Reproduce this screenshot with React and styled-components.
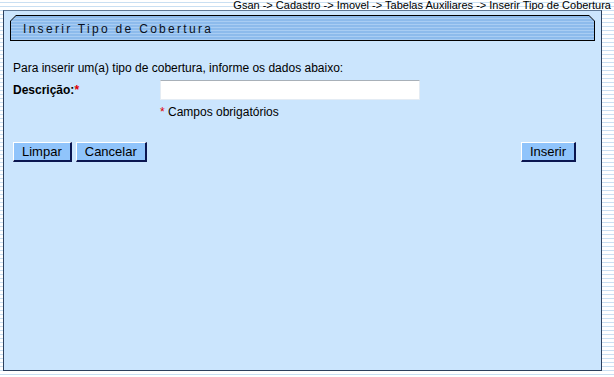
import React from 'react';
import styled, { createGlobalStyle } from 'styled-components';

const GlobalStyle = createGlobalStyle`
	html, body {
		margin: 0;
		padding: 0;
	}
	body {
		width: 614px;
		height: 377px;
		overflow: hidden;
		font-family: "Liberation Sans", Arial, sans-serif;
		background: repeating-linear-gradient(
			to bottom,
			#ffffff 0px,
			#ffffff 2px,
			#c9dff2 2px,
			#c9dff2 3px,
			#ffffff 3px,
			#ffffff 4px
		);
	}
`;

const Page = styled.div`
	display: flex;
	flex-direction: column;
`;

const Breadcrumb = styled.div`
	height: 10px;
	line-height: 10px;
	font-size: 11px;
	color: #000;
	text-align: right;
	padding-right: 3px;
	white-space: nowrap;
`;

const Panel = styled.div`
	margin: 0 12px 0 3px;
	height: 351px;
	border: 1px solid #2c3f5c;
	border-top-color: #5f7896;
	background: #cbe5fd;
	padding: 4px 6px;
	display: flex;
	flex-direction: column;
`;

const Header = styled.div`
	position: relative;
	height: 26px;
	background: #000;
	clip-path: polygon(6px 0, calc(100% - 6px) 0, 100% 6px, 100% 100%, 0 100%, 0 6px);
`;

const HeaderFill = styled.div`
	position: absolute;
	inset: 1px;
	clip-path: polygon(5px 0, calc(100% - 5px) 0, 100% 5px, 100% 100%, 0 100%, 0 5px);
	background: repeating-linear-gradient(
		to bottom,
		#8dbbec 0px,
		#8dbbec 2px,
		#a9cdf3 2px,
		#a9cdf3 3px
	);
	display: flex;
	align-items: center;
	padding-left: 12px;
	padding-top: 2px;
	font-size: 12px;
	letter-spacing: 2.3px;
	color: #0a1020;
`;

const Intro = styled.div`
	margin-top: 20px;
	padding-left: 3px;
	font-size: 12px;
	color: #000;
`;

const FormRow = styled.div`
	display: grid;
	grid-template-columns: 147px 260px;
	align-items: center;
	margin-top: 5px;
	padding-left: 3px;
`;

const Label = styled.label`
	font-size: 12px;
	font-weight: bold;
	color: #000;
`;

const Required = styled.span`
	color: #e00000;
`;

const Input = styled.input`
	height: 20px;
	box-sizing: border-box;
	border: 1px solid #e4ecf4;
	border-top-color: #a8b0b8;
	background: #fff;
	outline: none;
`;

const Note = styled.div`
	margin-top: 5px;
	padding-left: 150px;
	font-size: 12px;
	color: #000;
`;

const ButtonBar = styled.div`
	display: flex;
	align-items: center;
	gap: 4px;
	margin-top: 23px;
	padding-left: 3px;
	padding-right: 19px;
`;

const Spacer = styled.div`
	flex: 1;
`;

const Button = styled.button`
	height: 20px;
	padding: 0 ${({ pad }) => pad}px;
	font-family: "Liberation Sans", Arial, sans-serif;
	font-size: 13px;
	color: #000;
	background: #90c4fb;
	border-style: solid;
	border-color: #ffffff #0b1650 #0b1650 #ffffff;
	border-width: 1px 2px 2px 1px;
	cursor: pointer;
	line-height: 16px;
`;

export default function App() {
	return (
		<Page>
			<GlobalStyle />
			<Breadcrumb>
				Gsan -&gt; Cadastro -&gt; Imovel -&gt; Tabelas Auxiliares -&gt; Inserir Tipo de Cobertura
			</Breadcrumb>
			<Panel>
				<Header>
					<HeaderFill>Inserir Tipo de Cobertura</HeaderFill>
				</Header>
				<Intro>Para inserir um(a) tipo de cobertura, informe os dados abaixo:</Intro>
				<FormRow>
					<Label>
						Descrição:<Required>*</Required>
					</Label>
					<Input type="text" />
				</FormRow>
				<Note>
					<Required>*</Required> Campos obrigatórios
				</Note>
				<ButtonBar>
					<Button pad={8}>Limpar</Button>
					<Button pad={8}>Cancelar</Button>
					<Spacer />
					<Button pad={8}>Inserir</Button>
				</ButtonBar>
			</Panel>
		</Page>
	);
}
